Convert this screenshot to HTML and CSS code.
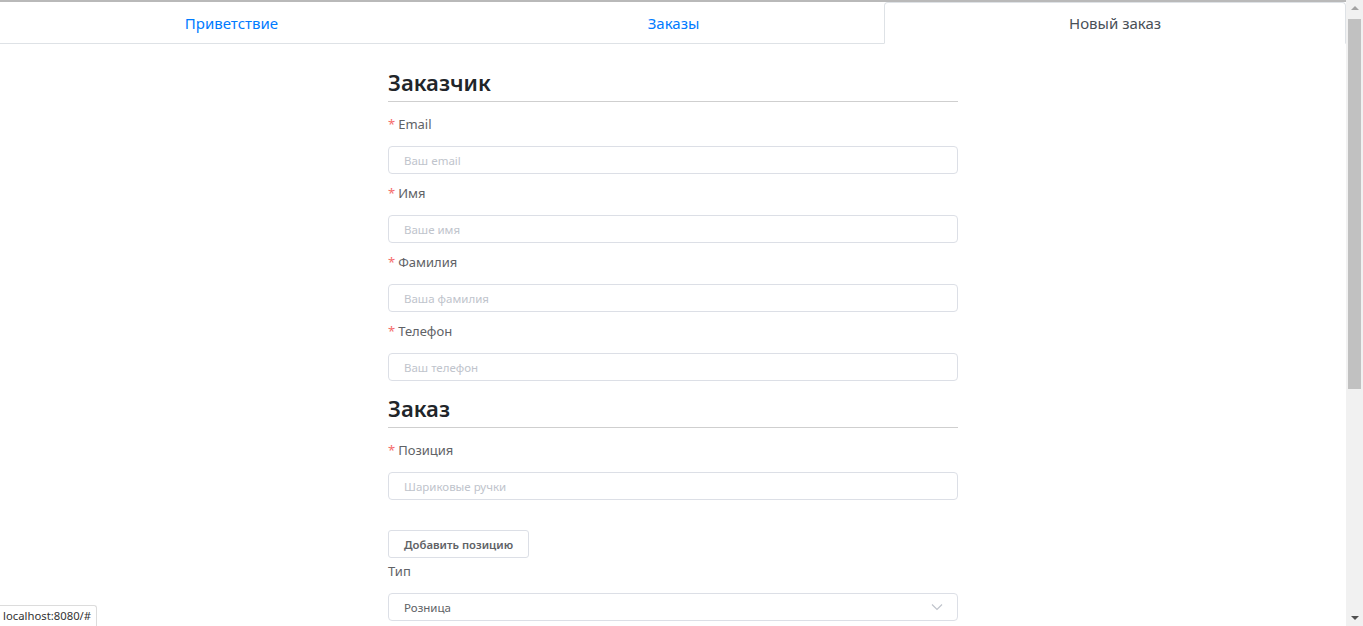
FILE: index.html
```html
<!DOCTYPE html>
<html lang="ru">
<head>
<meta charset="utf-8">
<title>Новый заказ</title>
<link rel="stylesheet" href="styles.css">
</head>
<body>
<div class="page">
  <div class="topline"></div>
  <ul class="tabs">
    <li class="tab"><a href="#" class="tab-link">Приветствие</a></li>
    <li class="tab"><a href="#" class="tab-link">Заказы</a></li>
    <li class="tab"><a href="#" class="tab-link active">Новый заказ</a></li>
  </ul>
  <main class="container">
    <form class="form">
      <h2 class="section-title first">Заказчик</h2>
      <div class="item">
        <label class="label required">Email</label>
        <input class="input" type="text" placeholder="Ваш email">
      </div>
      <div class="item">
        <label class="label required">Имя</label>
        <input class="input" type="text" placeholder="Ваше имя">
      </div>
      <div class="item">
        <label class="label required">Фамилия</label>
        <input class="input" type="text" placeholder="Ваша фамилия">
      </div>
      <div class="item">
        <label class="label required">Телефон</label>
        <input class="input" type="text" placeholder="Ваш телефон">
      </div>
      <h2 class="section-title">Заказ</h2>
      <div class="item">
        <label class="label required">Позиция</label>
        <input class="input" type="text" placeholder="Шариковые ручки">
      </div>
      <div class="actions">
        <button type="button" class="btn">Добавить позицию</button>
      </div>
      <div class="item">
        <label class="label">Тип</label>
        <div class="select">
          <span class="select-value">Розница</span>
          <svg class="select-arrow" width="12" height="8" viewBox="0 0 12 8"><path d="M1 1.5 L6 6.5 L11 1.5" fill="none" stroke="#c0c4cc" stroke-width="1.2"/></svg>
        </div>
      </div>
    </form>
  </main>
</div>
<aside class="scrollbar">
  <div class="sb-arrow up"></div>
  <div class="sb-track"><div class="sb-thumb"></div></div>
  <div class="sb-arrow down"></div>
</aside>
<div class="statusbar">localhost:8080/#</div>
</body>
</html>
```
FILE: styles.css
```css
* { box-sizing: border-box; }
html, body { margin: 0; padding: 0; height: 100%; }
body {
  display: flex;
  overflow: hidden;
  font-family: "Noto Sans", "Open Sans", sans-serif;
  color: #212529;
  background: #fff;
}
.page { flex: 1; min-width: 0; height: 100vh; overflow: hidden; }
.topline { height: 2px; background: #b9b9b9; }
.tabs {
  list-style: none; margin: 0; padding: 0;
  display: flex;
  border-bottom: 1px solid #dee2e6;
  height: 42px;
}
.tab { flex: 1 1 auto; text-align: center; margin-bottom: -1px; }
.tab-link {
  display: block;
  padding: 8px 16px;
  line-height: 24px;
  font-size: 15px;
  color: #007bff;
  text-decoration: none;
  border: 1px solid transparent;
  border-top-left-radius: 4px;
  border-top-right-radius: 4px;
  height: 42px;
}
.tab-link.active {
  color: #495057;
  background: #fff;
  border-color: #dee2e6 #dee2e6 #fff;
}
.container { width: 570px; margin: 0 auto; padding-top: 11px; }
.form { display: flex; flex-direction: column; }
.section-title {
  margin: 12px 0 0;
  font-size: 22px;
  font-weight: 600;
  line-height: 30px;
  padding-bottom: 4px;
  border-bottom: 1px solid #cfcfcf;
  color: #212529;
}
.item { display: flex; flex-direction: column; margin-top: 11px; }
.item + .item { margin-top: 8px; }
.label {
  font-size: 13px;
  line-height: 22px;
  color: #606266;
  margin-bottom: 11px;
}
.label.required::before { content: "*"; color: #f56c6c; margin-right: 3px; }
.input {
  height: 28px;
  width: 100%;
  border: 1px solid #dcdfe6;
  border-radius: 4px;
  padding: 0 15px;
  font-family: inherit;
  font-size: 11.5px;
  color: #606266;
  outline: none;
}
.input::placeholder { color: #c0c4cc; }
.actions { margin-top: 30px; }
.btn {
  height: 28px;
  padding: 0 15px;
  border: 1px solid #dcdfe6;
  border-radius: 3px;
  background: #fff;
  font-family: inherit;
  font-size: 11.3px;
  font-weight: 600;
  color: #606266;
}
.actions + .item { margin-top: 2px; }
.select {
  height: 28px;
  border: 1px solid #dcdfe6;
  border-radius: 4px;
  padding: 0 14px 0 15px;
  display: flex; align-items: center; justify-content: space-between;
  font-size: 11.5px;
  color: #606266;
}
.scrollbar {
  width: 17px; height: 100vh;
  background: #f1f1f1;
  display: flex; flex-direction: column;
  flex-shrink: 0;
}
.sb-arrow { height: 17px; position: relative; }
.sb-arrow::after {
  content: ""; position: absolute; left: 5px; top: 6px;
  border-left: 4px solid transparent; border-right: 4px solid transparent;
}
.sb-arrow.up::after { border-bottom: 4px solid #a3a3a3; }
.sb-arrow.down::after { border-top: 4px solid #505050; top: 7px; }
.sb-track { flex: 1; padding: 2px 2px 0; }
.sb-thumb { height: 370px; background: #c1c1c1; }
.statusbar {
  position: fixed; left: 0; bottom: 0;
  height: 21px;
  padding: 0 5px 0 3px;
  line-height: 20px;
  font-size: 11.3px;
  color: #333;
  background: #fff;
  border: 1px solid #dcdcdc;
  border-left: none; border-bottom: none;
  border-top-right-radius: 3px;
  font-family: "Noto Sans", sans-serif;
}
```
